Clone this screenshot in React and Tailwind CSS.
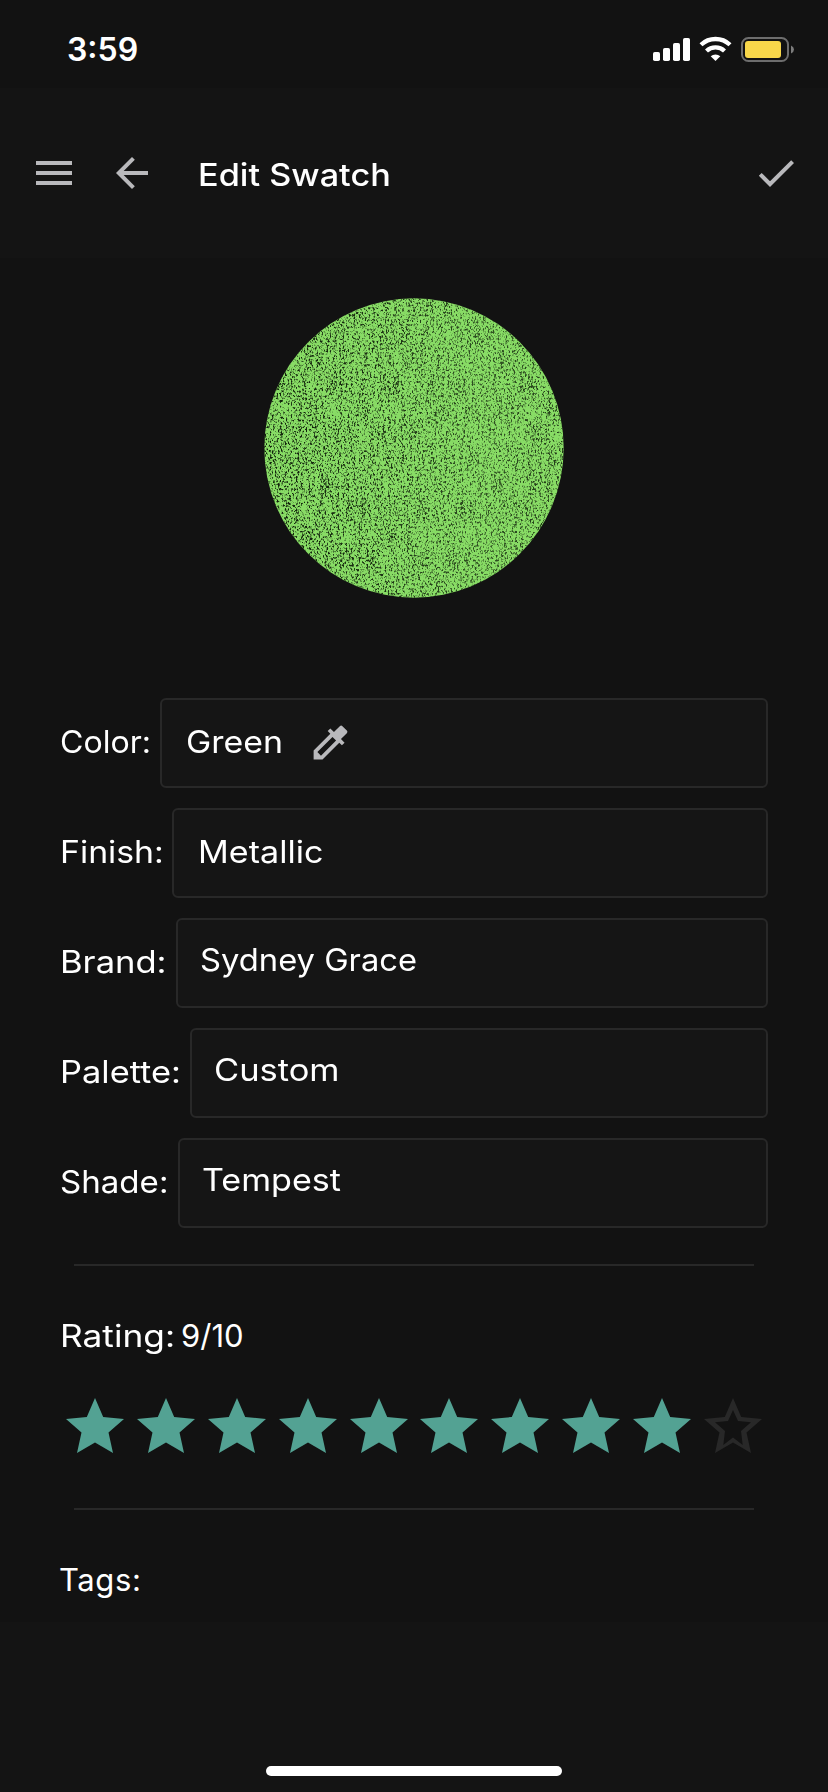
import React from 'react';
import { MdMenu, MdArrowBack, MdCheck, MdColorize } from 'react-icons/md';

const fields = [
  { label: 'Color:', value: 'Green', labelBox: 'w-[100px]', labelText: 'scale-x-[1.035]', valueText: 'scale-x-[1.093]', pad: 'pl-6 pb-0.5', picker: true },
  { label: 'Finish:', value: 'Metallic', labelBox: 'w-[112px]', labelText: 'scale-x-[1.09]', valueText: 'scale-x-[1.1]', pad: 'pl-6 pb-0.5' },
  { label: 'Brand:', value: 'Sydney Grace', labelBox: 'w-[116px]', labelText: 'scale-x-[1.115]', valueText: 'scale-x-[1.056]', pad: 'pl-[22px] pb-1.5' },
  { label: 'Palette:', value: 'Custom', labelBox: 'w-[130px]', labelText: 'scale-x-[1.11]', valueText: 'scale-x-[1.112]', pad: 'pl-[22px] pb-1.5' },
  { label: 'Shade:', value: 'Tempest', labelBox: 'w-[118px]', labelText: 'scale-x-[1.067]', valueText: 'scale-x-[1.1]', pad: 'pl-[22px] pb-1.5' },
];

function StatusBar() {
  return (
    <div className="flex h-[88px] shrink-0 items-start bg-[#121212]">
      <div className="ml-[67px] mt-[30px] text-[32px] font-semibold leading-10">3:59</div>
      <svg className="ml-auto mr-[32px] mt-9" width="144" height="28" viewBox="0 0 144 28">
        <g fill="#fff">
          <rect x="1" y="16" width="7" height="9" rx="1.8" />
          <rect x="11" y="12" width="7" height="13" rx="1.8" />
          <rect x="21" y="7" width="7" height="18" rx="1.8" />
          <rect x="31" y="2" width="7" height="23" rx="1.8" />
          <path d="M63.500 25 L58.700 20.300 A7 7 0 0 1 68.300 20.300 Z" />
        </g>
        <g fill="none" stroke="#fff" strokeWidth="4.300">
          <path d="M49 8.800 A21 21 0 0 1 78 8.800" />
          <path d="M54.500 15 A13 13 0 0 1 72.500 15" />
        </g>
        <rect x="90" y="2" width="46" height="23" rx="6.500" fill="none" stroke="#6d6d6d" strokeWidth="2" />
        <rect x="93" y="5" width="36" height="17" rx="3" fill="#f8d74a" />
        <path d="M139 9.500 Q142 11 142 13.500 Q142 16 139 17.500 Z" fill="#7c7c7c" />
      </svg>
    </div>
  );
}

function Header() {
  return (
    <header className="flex h-[170px] shrink-0 items-center bg-[#141414] pl-[30px] pr-7 text-[#b9b9bc]">
      <MdMenu size={48} />
      <MdArrowBack size={48} className="ml-[30px]" />
      <h1 className="ml-[42px] mt-[3px] origin-left scale-x-[1.104] text-[31px] font-medium leading-10 text-white">Edit Swatch</h1>
      <MdCheck size={48} className="ml-auto" />
    </header>
  );
}

function Swatch() {
  return (
    <svg className="mx-auto mt-10 block shrink-0" width="300" height="300" viewBox="0 0 300 300">
      <defs>
        <clipPath id="disc">
          <circle cx="150" cy="150" r="149.700" />
        </clipPath>
        <filter id="grain" x="0" y="0" width="100%" height="100%" colorInterpolationFilters="sRGB">
          <feTurbulence type="fractalNoise" baseFrequency="0.62 0.42" numOctaves="2" seed="7" result="fine" />
          <feTurbulence type="fractalNoise" baseFrequency="0.37 0.04" numOctaves="1" seed="3" result="streaks" />
          <feComposite in="fine" in2="streaks" operator="arithmetic" k1="0" k2="0.75" k3="0.25" k4="0" />
          <feColorMatrix values="0 0 0 0 0.06  0 0 0 0 0.12  0 0 0 0 0.04  6 0 0 0 -2.980" />
        </filter>
        <linearGradient id="density">
          <stop offset="0" stopColor="#fff" />
          <stop offset="0.4" stopColor="#e6e6e6" />
          <stop offset="0.75" stopColor="#bbb" />
          <stop offset="1" stopColor="#ddd" />
        </linearGradient>
        <mask id="fade">
          <rect width="300" height="300" fill="url(#density)" />
        </mask>
      </defs>
      <g clipPath="url(#disc)">
        <rect width="300" height="300" fill="#88dc65" />
        <g mask="url(#fade)">
          <rect width="300" height="300" filter="url(#grain)" />
        </g>
      </g>
    </svg>
  );
}

function Field({ field }) {
  return (
    <div className="flex h-[90px] items-center">
      <div className={`shrink-0 whitespace-nowrap pb-0.5 leading-10 ${field.labelBox}`}>
        <span className={`inline-block origin-left ${field.labelText}`}>{field.label}</span>
      </div>
      <div className={`flex h-full flex-1 items-center rounded-md border-2 border-[#282828] bg-[#151515] ${field.pad}`}>
        <span className={`origin-left whitespace-nowrap leading-10 ${field.valueText} ${field.picker ? 'w-[122px]' : ''}`}>{field.value}</span>
        {field.picker && <MdColorize size={45} className="text-[#b9b9bc]" />}
      </div>
    </div>
  );
}

const OUTER = 'M30 1 L38.200 20 L59 22 L43.500 35.500 L48 56 L30 45.500 L12 56 L16.500 35.500 L1 22 L21.800 20 Z';
const INNER = 'M30 13 L35 24 L48 25.300 L38 34 L39.700 48 L30 40.500 L20.300 48 L22 34 L12 25.300 L25 24 Z';

function Star({ filled }) {
  return (
    <svg className="mx-auto" width="60" height="58" viewBox="0 0 60 58">
      <path d={filled ? OUTER : `${OUTER} ${INNER}`} fillRule="evenodd" fill={filled ? '#53a293' : '#282828'} />
    </svg>
  );
}

export default function App() {
  return (
    <div className="flex h-[1792px] w-[828px] flex-col bg-[#121212] font-['Inter','Noto_Sans',sans-serif] text-[31px] text-white">
      <StatusBar />
      <Header />
      <main className="flex flex-1 flex-col">
        <Swatch />
        <section className="mt-[100px] flex flex-col gap-5 px-[60px]">
          {fields.map((f) => (
            <Field key={f.label} field={f} />
          ))}
        </section>
        <div className="mx-[74px] mt-9 h-0.5 bg-[#282828]" />
        <section className="px-[60px]">
          <div className="mt-[50px] flex leading-10">
            <div className="w-[121px]">
              <span className="inline-block origin-left scale-x-[1.138]">Rating:</span>
            </div>
            <span>9/10</span>
          </div>
          <div className="mt-[41px] grid grid-cols-10">
            {Array.from({ length: 10 }, (_, i) => (
              <Star key={i} filled={i < 9} />
            ))}
          </div>
        </section>
        <div className="mx-[74px] mt-[53px] h-0.5 bg-[#282828]" />
        <div className="mt-[50px] px-[59px] leading-10 tracking-[0.6px]">Tags:</div>
      </main>
      <footer className="flex h-[170px] shrink-0 items-end justify-center bg-[#141414] pb-4">
        <div className="h-2.5 w-[296px] rounded-full bg-white" />
      </footer>
    </div>
  );
}
